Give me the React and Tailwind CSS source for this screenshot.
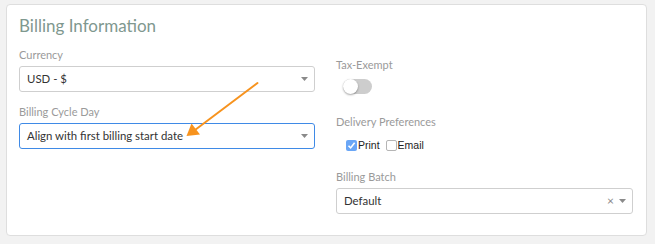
import React from "react";

function Caret() {
  return (
    <svg width="7" height="4" viewBox="0 0 7 4" className="shrink-0">
      <path d="M0 0 L7 0 L3.5 4 Z" fill="#8a8a8a" />
    </svg>
  );
}

function Select({ value, focused, clear }) {
  return (
    <div
      className={
        "h-[26px] flex items-center pl-[7px] pr-[6px] rounded-[3px] bg-white border " +
        (focused ? "border-[#3f8ae6]" : "border-[#cfcfcf]")
      }
    >
      <span className="flex-1 text-[11.4px] text-[#333] leading-[14px]">{value}</span>
      {clear && <span className="text-[12px] text-[#888] mr-[5px] leading-none">×</span>}
      <Caret />
    </div>
  );
}

function Label({ children }) {
  return <div className="text-[11px] text-[#9a9a9a] leading-[14px] mb-[4px]">{children}</div>;
}

export default function App() {
  return (
    <div className="w-[655px] h-[244px] bg-[#f2f2f2] pt-[4px] pl-[6px] font-['Lato',sans-serif] relative">
      <div className="w-[641px] h-[232px] bg-white border border-[#dedede] rounded-[4px] px-[12px] pt-[11px]">
        <div className="text-[17px] leading-[20px] text-[#7f988f] mb-[12px]">Billing Information</div>
        <div className="flex gap-[21px]">
          <div className="w-[296px]">
            <Label>Currency</Label>
            <Select value="USD - $" />
            <div className="h-[13px]" />
            <Label>Billing Cycle Day</Label>
            <Select value="Align with first billing start date" focused />
          </div>
          <div className="w-[297px] pt-[10px]">
            <Label>Tax-Exempt</Label>
            <div className="mt-[7px] ml-[7px] w-[29px] h-[15px] rounded-full bg-[#cdcdcd] relative">
              <div className="absolute left-0 top-0 w-[15px] h-[15px] rounded-full bg-white shadow-[0_1px_2px_rgba(0,0,0,0.35)]" />
            </div>
            <div className="h-[21px]" />
            <Label>Delivery Preferences</Label>
            <div className="flex items-center h-[11px] ml-[10px] mt-[11px] font-['Liberation_Sans',sans-serif] text-[10.5px] text-[#222] leading-[11px]">
              <span className="w-[11px] h-[11px] rounded-[2px] bg-[#6aa6f6] flex items-center justify-center">
                <svg width="9" height="9" viewBox="0 0 9 9">
                  <path d="M1.5 4.8 L3.6 6.9 L7.6 1.8" stroke="white" strokeWidth="1.6" fill="none" />
                </svg>
              </span>
              <span className="ml-[1px]">Print</span>
              <span className="ml-[6px] w-[11px] h-[11px] rounded-[2px] border border-[#b5b5b5] bg-white" />
              <span className="ml-[1px]">Email</span>
            </div>
            <div className="h-[19px]" />
            <Label>Billing Batch</Label>
            <Select value="Default" clear />
          </div>
        </div>
      </div>
      <svg className="absolute left-0 top-0 pointer-events-none" width="655" height="244">
        <line x1="257.5" y1="83" x2="195" y2="130" stroke="#f7931e" strokeWidth="2" strokeLinecap="round" />
        <path d="M186.5 136 L191.5 123.5 L200 134.5 Z" fill="#f7931e" />
      </svg>
    </div>
  );
}
